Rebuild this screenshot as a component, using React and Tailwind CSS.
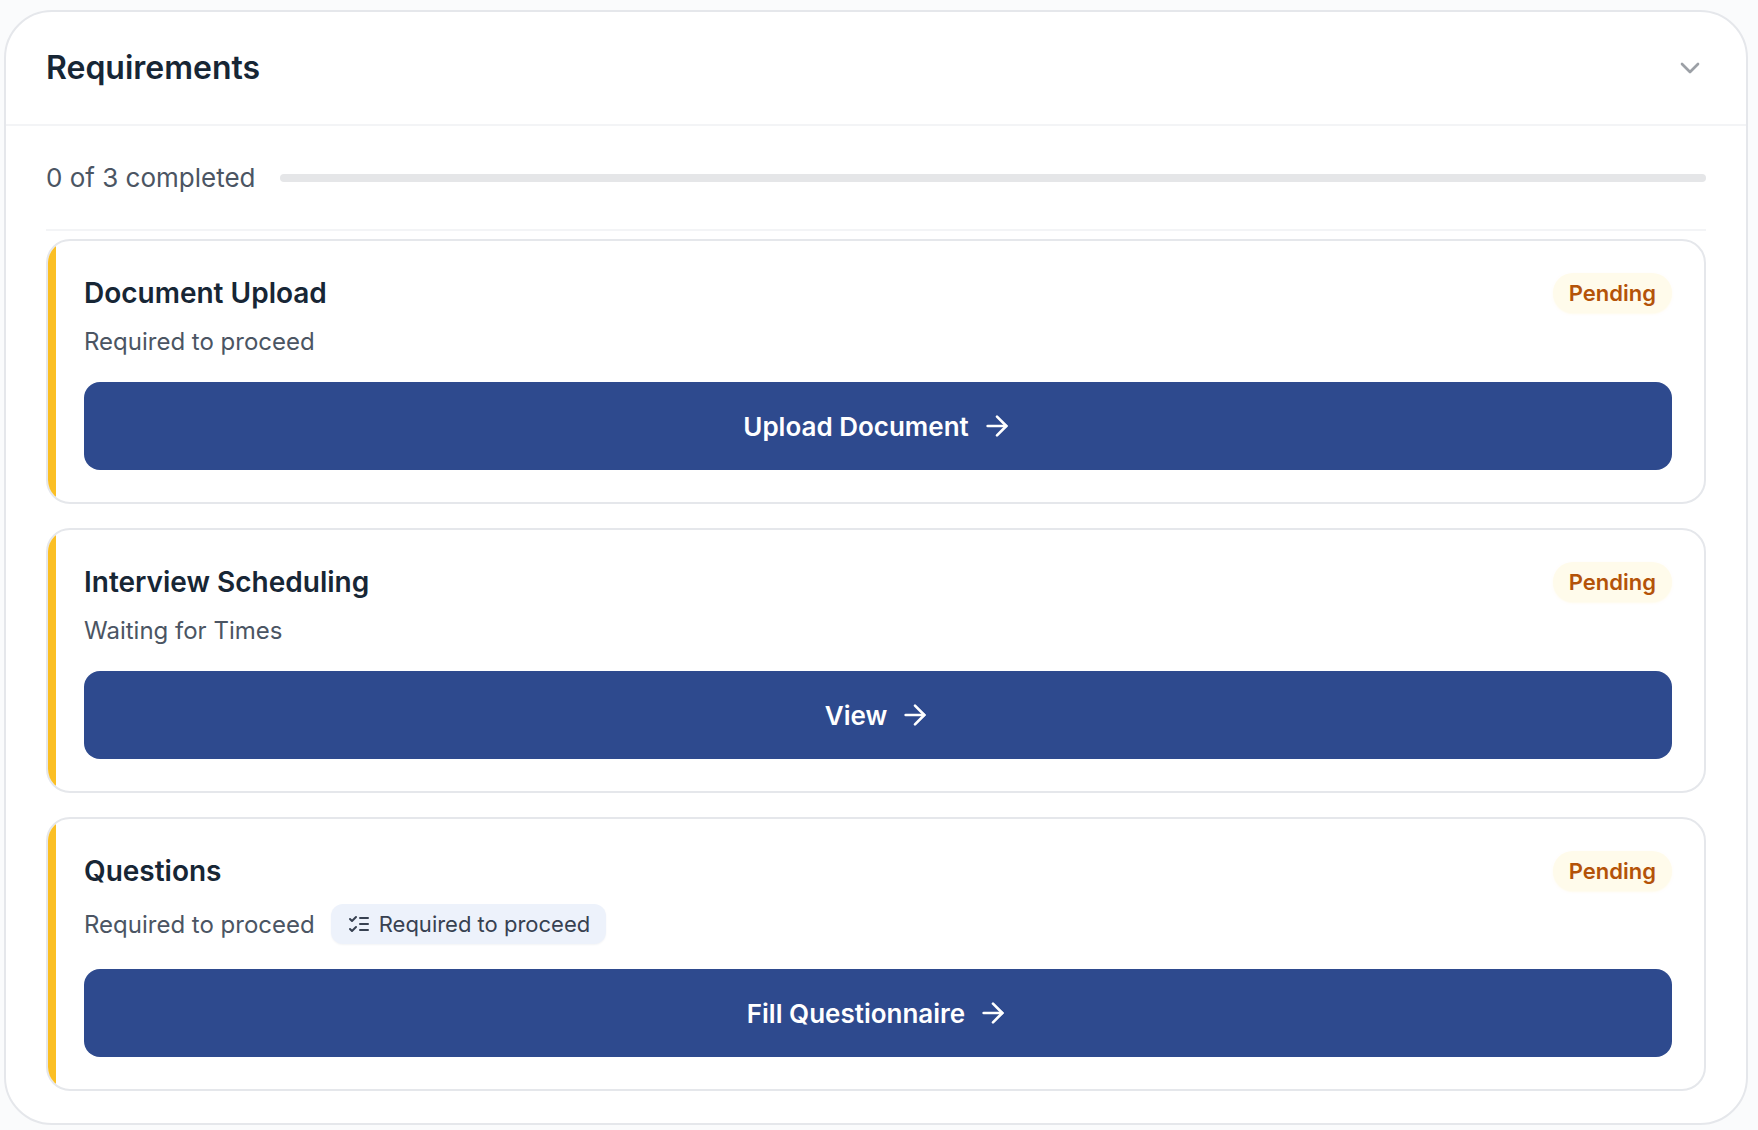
import React from 'react';
import { ArrowRight, ChevronDown } from 'lucide-react';

const requirements = [
    { id: 1, title: 'Document Upload', note: 'Required to proceed', action: 'Upload Document' },
    { id: 2, title: 'Interview Scheduling', note: 'Waiting for Times', action: 'View' },
    { id: 3, title: 'Questions', note: 'Required to proceed', tag: 'Required to proceed', action: 'Fill Questionnaire' },
];

const ChecklistIcon = () => (
    <svg width="24" height="24" viewBox="0 0 24 24" fill="none" stroke="currentColor" strokeWidth="2" strokeLinecap="round" strokeLinejoin="round" aria-hidden="true">
        <path d="m3 17 2 2 4-4" />
        <path d="m3 7 2 2 4-4" />
        <path d="M13 6h8" />
        <path d="M13 12h8" />
        <path d="M13 18h8" />
    </svg>
);

const RequirementCard = ({ requirement }) => {
    const { title, note, tag, action } = requirement;

    return (
        <li className="flex overflow-hidden rounded-3xl border-2 border-gray-200 bg-white">
            <div className="w-2 shrink-0 bg-[#fbbf24]" />
            <div className="flex-1 py-8 pr-8 pl-7">
                <div className="flex items-center justify-between">
                    <h3 className="text-[28px] leading-10 font-semibold text-[#172635]">{title}</h3>
                    <span className="rounded-full bg-[#fffbeb] px-4 text-[22px] leading-10 font-semibold text-[#b45309] shadow-xs shadow-amber-50">
                        Pending
                    </span>
                </div>
                <div className="mt-3 flex items-center gap-4">
                    <p className="text-2xl leading-[33px] text-[#4b5563]">{note}</p>
                    {tag && (
                        <span className="my-px flex items-center gap-2 rounded-xl bg-[#edf2fb] px-4 text-[22px] leading-10 text-[#374151] shadow-xs shadow-gray-100">
                            <ChecklistIcon />
                            {tag}
                        </span>
                    )}
                </div>
                <button
                    type="button"
                    className="mt-6 flex h-22 w-full items-center justify-center gap-3 rounded-2xl bg-[#2e4a8e] text-[26px] font-semibold text-white"
                >
                    {action}
                    <ArrowRight size={32} />
                </button>
            </div>
        </li>
    );
};

const App = () => {
    return (
        <div className="min-h-screen bg-[#fafbfc] pt-2.5 pr-2.5 pb-1 pl-1 font-['Inter',sans-serif]">
            <section className="rounded-[48px] border-2 border-gray-200 bg-white">
                <header className="flex h-[114px] items-center justify-between border-b-2 border-gray-100 px-10">
                    <h2 className="text-[32px] leading-10 font-semibold text-[#172635]">Requirements</h2>
                    <button type="button" aria-label="Collapse requirements" className="text-[#9ca0a6]">
                        <ChevronDown size={32} />
                    </button>
                </header>
                <div className="px-10 pb-8">
                    <div className="flex items-center gap-6 border-b-2 border-gray-100 py-8">
                        <span className="text-[26px] leading-[39px] text-[#4b5563]">0 of 3 completed</span>
                        <div
                            role="progressbar"
                            aria-label="Completed requirements"
                            aria-valuenow={0}
                            aria-valuemin={0}
                            aria-valuemax={3}
                            className="h-2 flex-1 rounded-full bg-[#e5e6e8]"
                        />
                    </div>
                    <ul className="mt-2 flex flex-col gap-6">
                        {requirements.map((requirement) => (
                            <RequirementCard key={requirement.id} requirement={requirement} />
                        ))}
                    </ul>
                </div>
            </section>
        </div>
    );
};

export default App;
